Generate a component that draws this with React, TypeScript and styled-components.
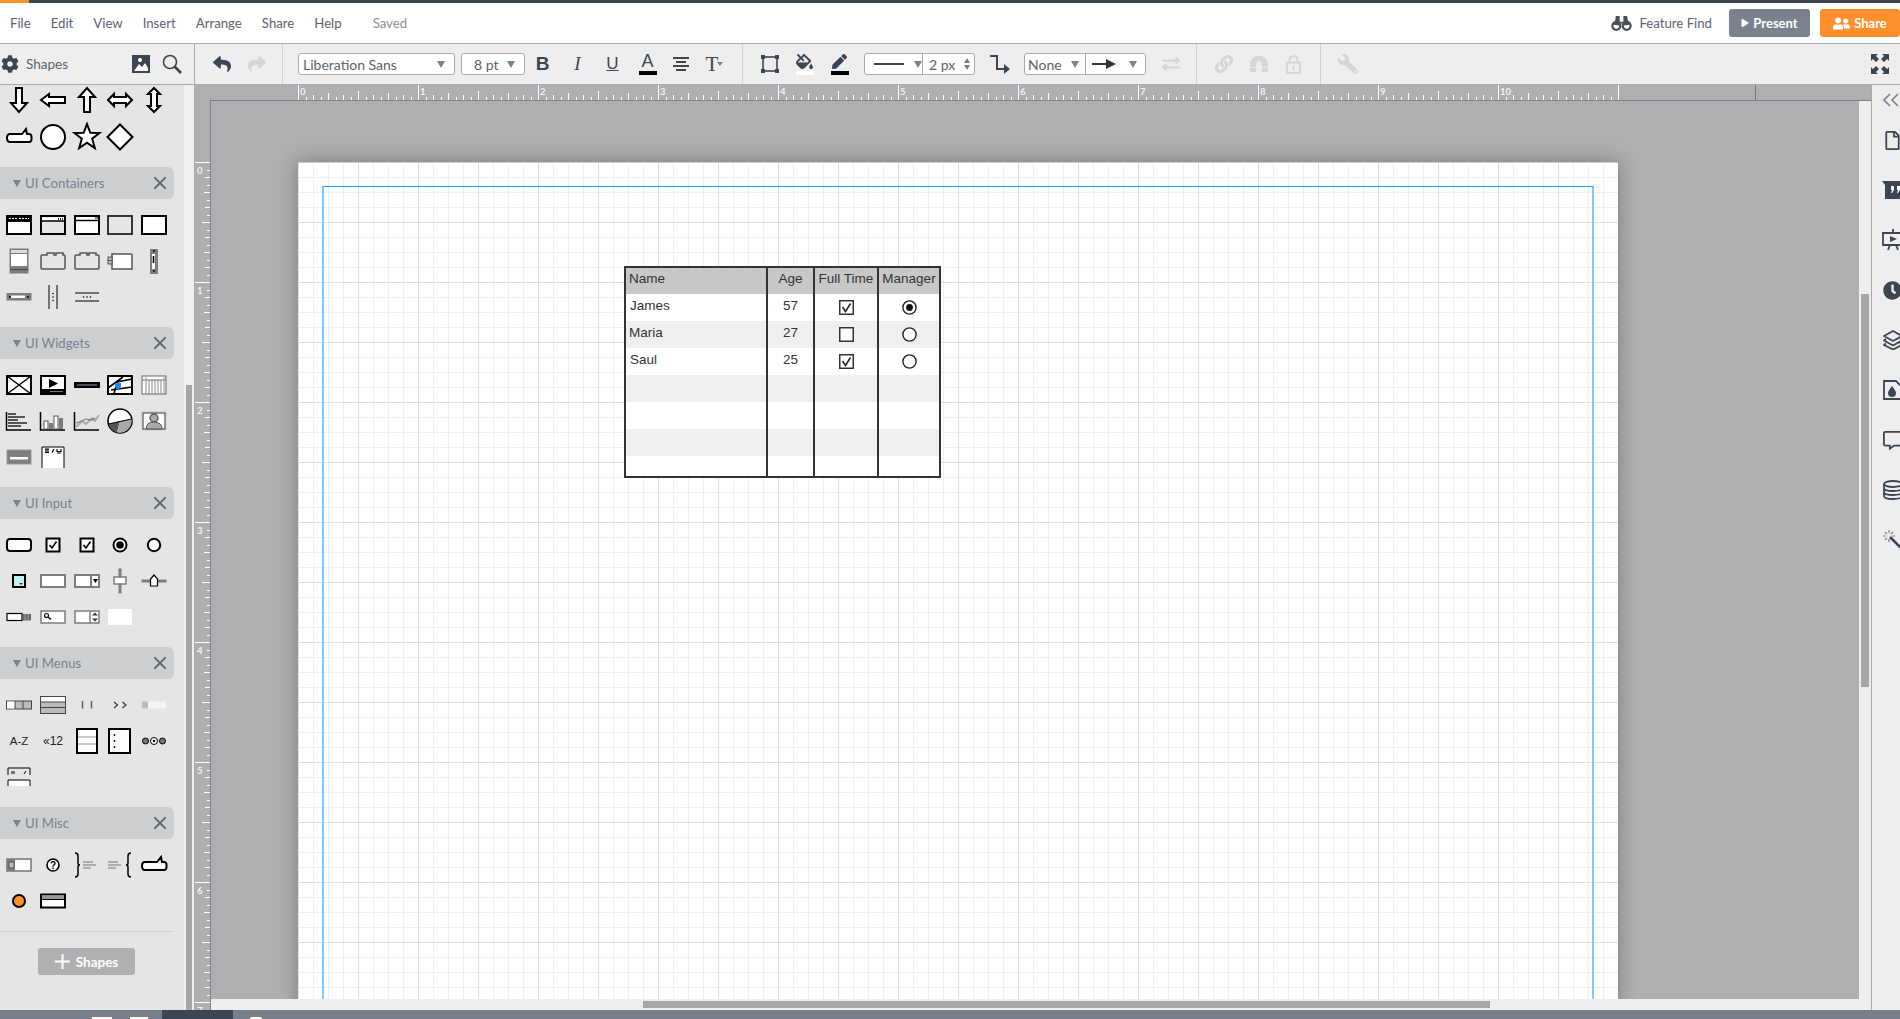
import React from "react";
import styled, { createGlobalStyle } from "styled-components";
import {
  FaCog, FaReply, FaShare, FaFillDrip, FaPen, FaExchangeAlt, FaLink, FaMagnet, FaWrench,
  FaUserFriends, FaClock, FaRegFile, FaRegCommentAlt, FaPlay,
} from "react-icons/fa";

const UI = `Lato, "Noto Sans", sans-serif`;
const DARK = "#3c4653";
const GREY = "#aeafb1";

const Global = createGlobalStyle`
  html, body { margin: 0; padding: 0; background: #fff; overflow: hidden; }
  * { box-sizing: border-box; }
`;

const Shell = styled.div`
  width: 1900px; height: 1019px; display: flex; flex-direction: column; overflow: hidden; font-family: ${UI};
`;
const Stripe = styled.div`height: 3px; flex: none; background: ${DARK};`;
const StripeProgress = styled.div`height: 3px; width: 29px; background: #ff8f2b;`;
const MenuBar = styled.div`
  height: 41px; flex: none; display: flex; align-items: center; gap: 20px; padding-left: 10px; background: #fff;
  border-bottom: 1px solid #aaa; font-size: 13.2px; color: #5c636d;
`;
const MenuItem = styled.span``;
const SavedLabel = styled.span`margin-left: 11px; color: #8c9198;`;
const MenuRight = styled.div`margin-left: auto; display: flex; align-items: center; height: 100%;`;
const FeatureFind = styled.div`display: flex; align-items: center; gap: 7px; margin-right: 7px; color: #5c636d; font-size: 13.2px;`;
const HeadButton = styled.div<{ $bg: string; $w: number }>`
  width: ${(p) => p.$w}px; height: 28px; border-radius: 3px; background: ${(p) => p.$bg};
  margin-left: 10px; color: #fff; font-size: 13px; font-weight: 700; display: flex; align-items: center; justify-content: center; gap: 4px;
`;

const Toolbar = styled.div`
  height: 41px; flex: none; display: flex; background: #eee; border-bottom: 1px solid #aaa; color: ${DARK};
`;
const ToolGroup = styled.div<{ $w?: number; $pad: number }>`
  ${(p) => (p.$w ? `width: ${p.$w}px; border-right: 1px solid ${p.$w === 195 ? "#aaa" : "#d2d2d2"};` : "flex: 1;")}
  flex-shrink: 0; padding-left: ${(p) => p.$pad}px; display: flex; align-items: center;
`;
const ShapesLabel = styled.span`margin-left: 7px; width: 106px; font-size: 13.5px; color: #5c636d;`;
const Tool = styled.div<{ $off?: boolean; $w?: number; $ml?: number }>`
  width: ${(p) => p.$w ?? 35}px; height: 100%; flex: none; display: flex; align-items: center; justify-content: center;
  margin-left: ${(p) => p.$ml ?? 0}px; font-size: 18px; color: ${(p) => (p.$off ? "#d6d6d6" : DARK)};
`;
const SwatchTool = styled(Tool)`flex-direction: column; justify-content: flex-start; padding-top: 9px;`;
const SwatchIcon = styled.div`height: 17px; display: flex; align-items: center; justify-content: center; font-size: 17px;`;
const SwatchBar = styled.div<{ $c: string }>`width: 18px; height: 4px; margin-top: 1px; background: ${(p) => p.$c};`;
const BoldMark = styled.span`font: 700 19px "Liberation Sans", sans-serif;`;
const ItalicMark = styled.span`font: italic 400 19px "Liberation Serif", serif;`;
const UnderMark = styled.span`font: 400 17px "Liberation Sans", sans-serif; text-decoration: underline;`;
const AMark = styled.span`font: 400 18px "Liberation Sans", sans-serif; line-height: 17px;`;
const SerifT = styled.span`font: 400 21px "Liberation Serif", serif;`;
const Caret = styled.span<{ $ml?: number }>`
  width: 0; height: 0; flex: none; margin-left: ${(p) => p.$ml ?? 0}px;
  border-left: 4px solid transparent; border-right: 4px solid transparent; border-top: 7px solid #7a828e;
`;
const TinyCaret = styled(Caret)`border-left-width: 3px; border-right-width: 3px; border-top-width: 4px; margin-left: -1px;`;
const Select = styled.div<{ $w: number; $ml?: number }>`
  width: ${(p) => p.$w}px; height: 22px; flex: none; margin-left: ${(p) => p.$ml ?? 0}px; display: flex; align-items: center;
  background: #fff; border: 1px solid #aaa; border-radius: 3px; font-size: 14px; color: #5c636d;
`;
const SelectText = styled.span<{ $pl: number }>`padding-left: ${(p) => p.$pl}px; flex: 1; white-space: nowrap;`;
const SelectCaret = styled(Caret)`margin-right: 9px;`;
const NoneCaret = styled(Caret)`margin-right: 6px;`;
const SelectPart = styled.div<{ $w?: number; $line?: boolean }>`
  ${(p) => (p.$w ? `width: ${p.$w}px;` : "flex: 1;")} height: 100%; display: flex; align-items: center;
  ${(p) => p.$line && "border-right: 1px solid #aaa;"}
`;
const LineSample = styled.span<{ $w: number; $ml: number }>`width: ${(p) => p.$w}px; margin-left: ${(p) => p.$ml}px; height: 2px; background: #444; flex: none;`;
const Spinner = styled.span`display: flex; flex-direction: column; gap: 2px; margin-right: 4px;`;
const SpinUp = styled.span`width: 0; height: 0; border: 3px solid transparent; border-top: 0; border-bottom: 5px solid #7a828e;`;
const SpinDown = styled.span`width: 0; height: 0; border: 3px solid transparent; border-bottom: 0; border-top: 5px solid #7a828e;`;
const FullScreen = styled.div`margin-left: auto; margin-right: 11px; display: flex;`;
const FlipWrench = styled(FaWrench)`transform: scaleX(-1);`;
const ArchMagnet = styled(FaMagnet)`transform: rotate(180deg);`;

const Main = styled.div`flex: 1; min-height: 0; display: flex;`;
const Sidebar = styled.div`width: 195px; flex: none; display: flex; border-right: 1px solid #aaa;`;
const SideList = styled.div`width: 184px; flex: none; background: #e5e5e5; overflow: hidden;`;
const SideTrack = styled.div`width: 10px; background: #f0f0f0; padding: 300px 2px 0;`;
const SideThumb = styled.div`height: 100%; background: #a5a7a5;`;
const SectionHeader = styled.div`
  width: 174px; height: 32px; background: #ccced0; border-radius: 0 6px 6px 0; display: flex; align-items: center;
  padding: 0 8px 0 13px; font-size: 13.2px; color: #7a828e;
`;
const SectionTitle = styled.span`margin-left: 4px; flex: 1;`;
const ShapeGrid = styled.div<{ $first?: boolean }>`
  display: grid; grid-template-columns: repeat(5, 33.75px); grid-auto-rows: 36px;
  padding: ${(p) => (p.$first ? "0 0 12px 2px" : "8px 0 12px 2px")}; row-gap: ${(p) => (p.$first ? "1px" : "0")};
  margin-top: ${(p) => (p.$first ? "-3px" : "0")};
`;
const Glyph = styled.svg`width: 34px; height: 36px; display: block;`;
const SideRule = styled.div`width: 174px; height: 1px; background: #d0d0d0;`;
const AddButton = styled.div`
  width: 97px; height: 27px; margin: 16px 0 0 38px; background: #aeb0b2; border-radius: 3px; color: #fff; font-weight: 700; font-size: 13.5px;
  display: flex; align-items: center; justify-content: center; gap: 6px;
`;

const Work = styled.div`flex: 1; min-width: 0; display: flex; flex-direction: column; background: ${GREY};`;
const RulerSvg = styled.svg`display: block; flex: none;`;
const WorkBody = styled.div`flex: 1; min-height: 0; display: flex;`;
const ViewColumn = styled.div`flex: 1; min-width: 0; display: flex; flex-direction: column;`;
const ViewRow = styled.div`flex: 1; min-height: 0; display: flex;`;
const Canvas = styled.div`flex: 1; min-width: 0; overflow: hidden; background: ${GREY}; padding: 61px 0 0 87px;`;
const Page = styled.div`
  position: relative; width: 1320px; height: 1020px; padding: 23px 24px 0; background-color: #fff; box-shadow: 0 0 18px rgba(0,0,0,.3);
  border-top: 1px solid #ccc;
  background-image:
    linear-gradient(#dedede 1px, transparent 1px), linear-gradient(90deg, #dedede 1px, transparent 1px),
    linear-gradient(#efefef 1px, transparent 1px), linear-gradient(90deg, #efefef 1px, transparent 1px);
  background-size: 60px 60px, 60px 60px, 15px 15px, 15px 15px;
  background-position: 0 -1px;
`;
const MarginFrame = styled.div`
  height: 100%; border-top: 1px solid #0a9cff; border-left: 2px solid #7fc8ff; border-right: 2px solid #7fc8ff;
`;
const VTrack = styled.div`width: 12px; flex: none; background: #eee; padding: 193px 2px 0 2px;`;
const VThumb = styled.div`height: 393px; background: #a5a7a5;`;
const HTrack = styled.div`height: 11px; flex: none; background: #eee; padding: 2px 0 0 432px;`;
const HThumb = styled.div`width: 847px; height: 7px; background: #a5a7a5;`;
const Rail = styled.div`width: 29px; flex: none; background: #eee; border-left: 1px solid #aaa; overflow: hidden; color: ${DARK};`;
const RailCell = styled.div<{ $h: number }>`height: ${(p) => p.$h}px; padding-left: 11px; display: flex; align-items: center; font-size: 19px;`;
const RailClip = styled.div`width: 22px; flex: none; display: flex;`;

const BottomBar = styled.div`height: 9px; flex: none; background: #777f8b; display: flex; overflow: hidden;`;
const BarMark = styled.div<{ $ml: number; $w: number; $round?: boolean }>`
  width: ${(p) => p.$w}px; height: 2px; margin: 7px 0 0 ${(p) => p.$ml}px; background: #fff; border-radius: ${(p) => (p.$round ? "6px 6px 0 0" : "0")};
`;
const BarTab = styled.div`width: 71px; margin-left: 14px; background: ${DARK};`;

const TableNode = styled.div`
  position: absolute; left: 326px; top: 103px; width: 317px; height: 212px; background: #fff; border: 2px solid #333;
  font: 13.5px/23px "Liberation Sans", sans-serif; color: #333; display: flex; flex-direction: column;
`;
const TableRow = styled.div<{ $bg: string; $h: number }>`
  height: ${(p) => p.$h}px; background: ${(p) => p.$bg}; display: grid; grid-template-columns: 140px 47px 64px 62px;
`;
const TextCell = styled.div<{ $pl: number; $head?: boolean }>`
  padding-left: ${(p) => p.$pl}px; ${(p) => p.$head && "line-height: 21px;"} white-space: nowrap;
`;
const ColCell = styled.div<{ $head?: boolean }>`
  border-left: 2px solid #333; display: flex; justify-content: center; align-items: ${(p) => (p.$head ? "flex-start" : "center")};
  ${(p) => p.$head && "line-height: 21px;"}
`;
const NumCell = styled(ColCell)`align-items: flex-start;`;

const W = "#fff";
const K = "#000";
const G = "#7d7d7d";

const Shape: React.FC<{ children: React.ReactNode }> = ({ children }) => (
  <Glyph viewBox="-17 -18 34 36" fill="none" stroke={K} strokeWidth={2}>{children}</Glyph>
);
const Dots: React.FC<{ pts: number[][]; r?: number; c?: string }> = ({ pts, r = 0.9, c = K }) => (
  <>{pts.map((p, i) => <circle key={i} cx={p[0]} cy={p[1]} r={r} fill={c} stroke="none" />)}</>
);
const Poly: React.FC<{ p: string }> = ({ p }) => <polygon points={p} fill={W} strokeLinejoin="miter" />;
const Check = () => <path d="M-3.5 0 L-1 3 L3.5 -3.5" strokeWidth={1.6} />;
const Callout = () => <path d="M-9 -3 H3 L7 -8 L8 -3 H10 Q12.5 -3 12.5 0 V2 Q12.5 5 10 5 H-9 Q-12 5 -12 1 Q-12 -3 -9 -3 Z" fill={W} />;

const topShapes = [
  <Poly p="-3,-12 3,-12 3,3 8,3 0,12 -8,3 -3,3" />,
  <Poly p="-12,0 -4,-6 -4,-3 12,-3 12,3 -4,3 -4,6" />,
  <Poly p="-3,12 3,12 3,-3 8,-3 0,-12 -8,-3 -3,-3" />,
  <Poly p="-12,0 -6,-6 -6,-3 6,-3 6,-6 12,0 6,6 6,3 -6,3 -6,6" />,
  <Poly p="0,-12 6,-6 3,-6 3,6 6,6 0,12 -6,6 -3,6 -3,-6 -6,-6" />,
  <Callout />,
  <circle r={12} fill={W} />,
  <Poly p="0,-13 3.3,-4.2 12.5,-4 5.2,1.7 7.8,11 0,5.6 -7.8,11 -5.2,1.7 -12.5,-4 -3.3,-4.2" />,
  <Poly p="0,-12.5 12.5,0 0,12.5 -12.5,0" />,
];
const containers = [
  <><rect x={-12} y={-9} width={24} height={18} fill={W} /><rect x={-12} y={-9} width={24} height={6} fill={K} stroke="none" /><path d="M-10 -6.5H-2M0 -6.5H10" stroke={W} strokeWidth={1} strokeDasharray="2 1" /></>,
  <><rect x={-12} y={-9} width={24} height={18} /><rect x={-11} y={-7.5} width={22} height={3} fill={W} stroke="none" /><path d="M-12 -4H12" strokeWidth={1.5} /><path d="M5 -6H10" stroke={K} strokeWidth={1.5} strokeDasharray="1 1" /></>,
  <><rect x={-12} y={-9} width={24} height={18} fill={W} /><path d="M-12 -4.5H12" strokeWidth={1.5} /><path d="M8 -7H11" stroke={K} strokeWidth={1} /></>,
  <rect x={-12} y={-9} width={24} height={18} strokeWidth={1.8} stroke="#222" />,
  <rect x={-12} y={-9} width={24} height={18} fill={W} />,
  <><rect x={-9} y={-12} width={18} height={24} fill={G} stroke={G} strokeWidth={1} /><rect x={-8} y={-11} width={16} height={3} fill="#ddd" stroke="none" /><rect x={-8} y={-7} width={16} height={12} fill={W} stroke="none" /><path d="M-9 8.5H9" stroke="#444" strokeWidth={1} /></>,
  <path d="M-12 -5Q-12 -6 -11 -6H-6V-8H1V-6H3V-8H10V-6H11Q12 -6 12 -5V7Q12 8 11 8H-11Q-12 8 -12 7Z" stroke="#555" strokeWidth={1.5} fill="none" />,
  <path d="M-12 -5Q-12 -6 -11 -6H-7V-8H0V-6H2V-8H9V-6H11Q12 -6 12 -5V7Q12 8 11 8H-11Q-12 8 -12 7Z" stroke="#555" strokeWidth={1.5} fill="none" />,
  <><path d="M-8 -7H11Q12 -7 12 -6V8H-8Z" fill={W} stroke="#555" strokeWidth={1.5} /><rect x={-12} y={-4} width={4} height={3.5} fill="#bbb" stroke="#555" strokeWidth={1} /><rect x={-12} y={-.5} width={4} height={3.5} fill="#bbb" stroke="#555" strokeWidth={1} /></>,
  <><rect x={-4} y={-12} width={8} height={25} fill={G} stroke="none" /><rect x={-2} y={-7} width={3} height={15} fill={W} stroke="none" /><path d="M-.5 -5V2" strokeWidth={1.6} /><Dots pts={[[0, -10], [0, 10]]} /></>,
  <><rect x={-12.5} y={-4} width={25} height={7.5} fill={G} stroke="none" /><rect x={-8} y={-1.5} width={14} height={2.5} fill={W} stroke="none" /><Dots pts={[[-9, 0], [9, 0]]} /></>,
  <><path d="M-4 -12V12M4 -12V12" strokeWidth={1} /><Dots pts={[[0, -3.5], [0, 0], [0, 3.5]]} r={.8} /></>,
  <><path d="M-12 -4H12M-12 4H12" strokeWidth={1} /><Dots pts={[[-3.5, 0], [0, 0], [3.5, 0]]} r={.8} /></>,
];
const widgets = [
  <><rect x={-12} y={-9} width={24} height={18} fill={W} /><path d="M-12 -9L12 9M12 -9L-12 9" strokeWidth={1.5} /></>,
  <><rect x={-12} y={-9} width={24} height={18} fill={W} /><path d="M-4 -6L5 -1.5L-4 3Z" fill={K} stroke="none" /><rect x={-12} y={4} width={24} height={5} fill={K} stroke="none" /><path d="M-3 6.5H10" stroke="#777" strokeWidth={1} /></>,
  <><rect x={-13} y={-3} width={26} height={6} fill={K} stroke="none" /><path d="M-10 0H10" stroke="#667" strokeWidth={1.5} /></>,
  <><rect x={-12} y={-9} width={24} height={18} fill={W} /><path d="M-12 3L3 -8M-6 9L-3 -3L12 -6M-9 5L12 2" strokeWidth={1.6} /><path d="M-5 -2H1V2L-2 5L-5 2Z" fill="#1e88e5" stroke="none" /></>,
  <><rect x={-12} y={-9} width={24} height={18} fill={W} stroke="#666" strokeWidth={1} /><path d="M-12 -5H12" stroke="#666" strokeWidth={1} /><path d="M-8 -5V9M-5 -5V9M-2 -5V9M1 -5V9M4 -5V9M7 -5V9M10 -5V9" stroke="#888" strokeWidth={1} /><Dots pts={[[-8, -7], [10, -7]]} r={.6} /></>,
  <><path d="M-12.5 -9V9H12" strokeWidth={1.5} /><path d="M-11 -7H-3M-11 -4H6M-11 -1H-1M-11 2H8M-11 5H2" stroke="#555" strokeWidth={2.2} /></>,
  <><path d="M-12.5 -9V9H12" strokeWidth={1.5} /><rect x={-9} y={0} width={4} height={8} fill={W} stroke="#555" strokeWidth={1} /><rect x={-4} y={2} width={4} height={6} fill={G} stroke="none" /><rect x={1} y={-5} width={4} height={13} fill={W} stroke="#555" strokeWidth={1} /><rect x={6} y={-3} width={4} height={11} fill={G} stroke="none" /></>,
  <><path d="M-12.5 -9V9H12" strokeWidth={1.5} /><path d="M-11 6L-5 0L-1 3L5 -3L8 0L12 -6" stroke="#aaa" strokeWidth={1.8} /><path d="M-11 2L-5 0L-1 -2L5 -1L8 -3" stroke={G} strokeWidth={1.2} /></>,
  <><circle r={12} fill={W} strokeWidth={1.6} /><path d="M0 0L-11.5 3A12 12 0 0 0 -3 11.5Z" fill="#555" stroke="none" /><path d="M0 0L-3 11.5A12 12 0 0 0 11.5 -2Z" fill="#aaa" stroke="none" /><path d="M-11.5 3L11.5 -2" strokeWidth={1} /></>,
  <><rect x={-12} y={-9} width={24} height={18} fill={W} stroke="#ccc" strokeWidth={1} /><rect x={-11} y={-8} width={22} height={16} stroke="#333" strokeWidth={1} /><circle cy={-3} r={4} stroke="#555" strokeWidth={1.3} fill="#aaa" /><path d="M-8 8Q-8 1 0 1Q8 1 8 8Z" fill="#aaa" stroke="#555" strokeWidth={1} /></>,
  <><rect x={-12} y={-7} width={24} height={14} fill={G} stroke="#999" strokeWidth={1} /><rect x={-9} y={0} width={18} height={2.5} fill={W} stroke="none" /></>,
  <><path d="M-11 11V-10H11V11" fill={W} strokeWidth={1} /><path d="M-8 -8H-4M-7 -8V-4.5M-5 -8V-4.5M-8 -4.5H-4M-1 -4.5L1 -8M4 -8V-5.5H8V-8M4 -4H8" strokeWidth={1.2} /></>,
];
const inputs = [
  <rect x={-12} y={-6} width={24} height={12} rx={3} fill={W} />,
  <><rect x={-6.5} y={-6.5} width={13} height={13} fill={W} /><Check /></>,
  <><rect x={-6.5} y={-6.5} width={13} height={13} fill={W} /><Check /></>,
  <><circle r={6.5} fill={W} /><circle r={3.8} fill={K} stroke="none" /></>,
  <circle r={6.2} fill={W} />,
  <><rect x={-6} y={-6} width={12} height={12} fill="#b7f0ff" /><path d="M-.5 1H5V5H-.5Z" fill="#e5e5e5" stroke="none" /><path d="M0 2H4L2 4Z" fill="#333" stroke="none" /></>,
  <rect x={-12} y={-6} width={24} height={12} fill={W} stroke={G} />,
  <><rect x={-12} y={-6} width={24} height={12} fill={W} stroke={G} /><rect x={3} y={-5} width={2} height={10} fill={G} stroke="none" /><path d="M6 -2H11L8.5 2Z" fill={K} stroke="none" /></>,
  <><path d="M0 -12.5V12.5" stroke={G} strokeWidth={3} /><rect x={-6} y={-4} width={12} height={7} fill={W} stroke={G} strokeWidth={1.5} /></>,
  <><path d="M-12.5 0H12.5" stroke={G} strokeWidth={3} /><path d="M-3.5 -2L0 -6L3.5 -2V5H-3.5Z" fill={W} strokeWidth={1.2} /></>,
  <><rect x={-12} y={-3.5} width={15} height={7} fill={W} strokeWidth={1.2} /><rect x={4} y={-3} width={8} height={6.5} fill="#666" stroke="none" /><path d="M6 -3V3M9 -3V3" stroke="#ccc" strokeWidth={.6} /></>,
  <><rect x={-12} y={-6} width={24} height={12} fill={W} stroke={G} strokeWidth={1.5} /><circle cx={-6.5} cy={-1.5} r={2} strokeWidth={1.2} /><path d="M-5 0L-2 2.5" strokeWidth={1.4} /></>,
  <><rect x={-12} y={-6} width={24} height={12} fill={W} stroke={G} strokeWidth={1.5} /><path d="M3 -6V6" stroke={G} strokeWidth={1.5} /><path d="M5 -1.5H11L8 -4.5ZM5 1.5H11L8 4.5Z" fill="#333" stroke="none" /></>,
  <rect x={-12} y={-8} width={24} height={16} fill={W} stroke="none" />,
];
const menus = [
  <><rect x={-12.5} y={-4} width={25} height={8} fill="#bbb" stroke="#444" strokeWidth={1} /><rect x={-12} y={-3.5} width={8} height={7} fill={W} stroke="none" /><path d="M-4 -4V4M4 -4V4" stroke="#444" strokeWidth={1} /></>,
  <><rect x={-12.5} y={-8.5} width={25} height={17} fill="#bbb" stroke="#444" strokeWidth={1} /><rect x={-12} y={-8} width={24} height={5} fill={W} stroke="none" /><path d="M-12 -3H12M-12 2.5H12" stroke="#444" strokeWidth={1} /></>,
  <path d="M-4.5 -4V3.5M4.5 -4V3.5" stroke="#666" strokeWidth={1.6} />,
  <path d="M-6 -3L-2.5 0L-6 3M2.5 -3L6 0L2.5 3" stroke="#333" strokeWidth={1.1} />,
  <><rect x={-12} y={-3.5} width={24} height={7} fill="#f4f4f4" stroke="none" /><rect x={-12} y={-3.5} width={6} height={7} fill="#bbb" stroke="none" /></>,
  <text x={0} y={4} textAnchor="middle" stroke="none" fill="#222" fontSize={11.5} fontFamily="Liberation Sans, sans-serif">A-Z</text>,
  <text x={0} y={4} textAnchor="middle" stroke="none" fill="#222" fontSize={12} fontFamily="Liberation Sans, sans-serif">«12</text>,
  <><rect x={-10} y={-12} width={20} height={24} fill={W} /><path d="M-9 -4H9M-9 3H9" stroke="#bbb" strokeWidth={1.5} /></>,
  <><rect x={-11} y={-12} width={21} height={24} fill={W} /><Dots pts={[[-5.5, -6], [-5.5, 0], [-5.5, 6]]} /></>,
  <><circle cx={-8.5} r={3} fill="#777" strokeWidth={1} /><circle r={3.5} fill={W} strokeWidth={1} /><circle cx={8.5} r={3} fill="#777" strokeWidth={1} /><circle r={1.2} fill={K} stroke="none" /></>,
  <><path d="M-11 -2V-9H11V-2" fill="none" strokeWidth={1} /><path d="M-7 -6V-3M-5 -6V-3M5 -3L7 -6" strokeWidth={1} /><path d="M-11 9V3H11V9" fill={W} strokeWidth={1} /></>,
];
const misc = [
  <><rect x={-12} y={-6} width={24} height={12} fill={W} stroke={G} strokeWidth={1.6} /><rect x={-12} y={-6} width={8} height={12} fill={G} stroke="none" /><rect x={-10} y={-3} width={5} height={6} fill="#bbb" stroke="#444" strokeWidth={.8} /></>,
  <><circle r={6} fill={W} strokeWidth={1.6} /><text x={0} y={4} textAnchor="middle" stroke="none" fill={K} fontSize={10} fontWeight={700} fontFamily="Liberation Sans, sans-serif">?</text></>,
  <><path d="M-12 -12Q-9 -12 -9 -9V-2Q-9 0 -7 0Q-9 0 -9 2V9Q-9 12 -12 12" strokeWidth={1.5} /><path d="M-4 -3H6M-4 0H9M-4 3H4" stroke="#999" strokeWidth={1.6} /></>,
  <><path d="M11 -12Q8 -12 8 -9V-2Q8 0 6 0Q8 0 8 2V9Q8 12 11 12" strokeWidth={1.5} /><path d="M-12 -3H-2M-12 0H1M-12 3H-4" stroke="#999" strokeWidth={1.6} /></>,
  <Callout />,
  <circle r={6} fill="#ff9229" />,
  <><rect x={-12} y={-6.5} width={24} height={13} fill={W} /><rect x={-11} y={-5.5} width={22} height={4} fill="#999" stroke="none" /><path d="M-11 -1.5H11" strokeWidth={1} /></>,
];
const sections: { title: string; items: React.ReactNode[] }[] = [
  { title: "UI Containers", items: containers },
  { title: "UI Widgets", items: widgets },
  { title: "UI Input", items: inputs },
  { title: "UI Menus", items: menus },
  { title: "UI Misc", items: misc },
];

const hTicks = () => {
  const out: React.ReactNode[] = [];
  for (let i = 0; i <= 176; i++) {
    const x = Math.round(298 + 7.5 * i) + 0.5;
    const h = i % 16 === 0 ? 15 : i % 8 === 0 ? 9 : i % 4 === 0 ? 7 : i % 2 === 0 ? 5 : 3;
    out.push(<line key={i} x1={x} x2={x} y1={100} y2={100 - h} stroke="#fff" />);
  }
  for (let n = 0; n <= 10; n++) {
    out.push(<text key={`t${n}`} x={298 + 120 * n + 2} y={95} fontSize={9.5} fontWeight={700} fill="#f2f2f2" fontFamily="Lato, sans-serif">{n}</text>);
  }
  return out;
};
const vTicks = () => {
  const out: React.ReactNode[] = [];
  for (let i = 0; i <= 112; i++) {
    const y = Math.round(162 + 7.5 * i) + 0.5;
    const w = i % 16 === 0 ? 15 : i % 8 === 0 ? 8 : i % 4 === 0 ? 6 : i % 2 === 0 ? 5 : 3;
    out.push(<line key={i} y1={y} y2={y} x1={210} x2={210 - w} stroke="#fff" />);
  }
  for (let n = 0; n <= 7; n++) {
    out.push(<text key={`t${n}`} x={197} y={162 + 120 * n + 12} fontSize={9.5} fontWeight={700} fill="#f2f2f2" fontFamily="Lato, sans-serif">{n}</text>);
  }
  return out;
};

const rows = [
  { name: "James", pl: 4, age: "57", c: true, r: true },
  { name: "Maria", pl: 3, age: "27", c: false, r: false },
  { name: "Saul", pl: 4, age: "25", c: true, r: false },
];
const TinyIcon = styled.svg<{ $w?: number; $h?: number }>`width: ${(p) => p.$w ?? 16}px; height: ${(p) => p.$h ?? 16}px; display: block; flex: none;`;
const RailIcon = styled(TinyIcon)`margin-left: -1px;`;
const ArrowIcon = styled(TinyIcon)`margin-left: 6px;`;

export default function App() {
  return (
    <Shell>
      <Global />
      <Stripe><StripeProgress /></Stripe>
      <MenuBar>
        {["File", "Edit", "View", "Insert", "Arrange", "Share", "Help"].map((m) => <MenuItem key={m}>{m}</MenuItem>)}
        <SavedLabel>Saved</SavedLabel>
        <MenuRight>
          <FeatureFind>
            <TinyIcon viewBox="0 0 22 16" $w={21} $h={15} fill="#4a4f57">
              <path d="M5 0H9V6H13V0H17L18 6L21 9L14 10L13 8H9L8 10L1 9L4 6Z" />
              <circle cx={5.5} cy={10.5} r={4.2} fill="none" stroke="#4a4f57" strokeWidth={2.4} />
              <circle cx={16.5} cy={10.5} r={4.2} fill="none" stroke="#4a4f57" strokeWidth={2.4} />
            </TinyIcon>
            Feature Find
          </FeatureFind>
          <HeadButton $bg="#7a828e" $w={81}><FaPlay size={8} />Present</HeadButton>
          <HeadButton $bg="#ff8f2b" $w={80}><FaUserFriends size={17} />Share</HeadButton>
        </MenuRight>
      </MenuBar>
      <Toolbar>
        <ToolGroup $w={195} $pad={1}>
          <FaCog size={18} />
          <ShapesLabel>Shapes</ShapesLabel>
          <TinyIcon viewBox="0 0 18 18" $w={18} $h={18}>
            <path d="M0 0H18V18H0Z" fill={DARK} />
            <path d="M2 16L7 9L10 12L13 8L16 13V16Z" fill="#fff" />
            <circle cx={8} cy={5} r={2} fill="#fff" />
          </TinyIcon>
          <Tool $w={44}>
            <TinyIcon viewBox="0 0 20 20" $w={20} $h={20} fill="none" stroke={DARK}><circle cx={8} cy={8} r={6.5} strokeWidth={1.6} /><path d="M12.5 12.5L19 19" strokeWidth={2.6} /></TinyIcon>
          </Tool>
        </ToolGroup>
        <ToolGroup $w={88} $pad={9}>
          <Tool><FaReply /></Tool>
          <Tool $off><FaShare /></Tool>
        </ToolGroup>
        <ToolGroup $w={460} $pad={15}>
          <Select $w={157}><SelectText $pl={4}>Liberation Sans</SelectText><SelectCaret /></Select>
          <Select $w={64} $ml={6}><SelectText $pl={12}>8 pt</SelectText><SelectCaret /></Select>
          <Tool><BoldMark>B</BoldMark></Tool>
          <Tool><ItalicMark>I</ItalicMark></Tool>
          <Tool><UnderMark>U</UnderMark></Tool>
          <SwatchTool><SwatchIcon><AMark>A</AMark></SwatchIcon><SwatchBar $c="#000" /></SwatchTool>
          <Tool $w={32}>
            <TinyIcon viewBox="0 0 16 14" $h={14} stroke={DARK} strokeWidth={2}><path d="M0 1H16M3 5H13M0 9H16M3 13H13" /></TinyIcon>
          </Tool>
          <Tool><SerifT>T</SerifT><TinyCaret /></Tool>
        </ToolGroup>
        <ToolGroup $w={454} $pad={9}>
          <Tool>
            <TinyIcon viewBox="0 0 18 18" $w={18} $h={18} fill="none" stroke={DARK}>
              <rect x={2} y={2} width={14} height={14} strokeWidth={1.6} /><path d="M0 0h4v4H0zM14 0h4v4h-4zM0 14h4v4H0zM14 14h4v4h-4z" fill={DARK} stroke="none" />
            </TinyIcon>
          </Tool>
          <SwatchTool><SwatchIcon><FaFillDrip /></SwatchIcon><SwatchBar $c="#fff" /></SwatchTool>
          <SwatchTool><SwatchIcon><FaPen size={15} /></SwatchIcon><SwatchBar $c="#000" /></SwatchTool>
          <Select $w={111} $ml={7}>
            <SelectPart $w={58} $line><LineSample $w={30} $ml={9} /><Caret $ml={10} /></SelectPart>
            <SelectPart><SelectText $pl={6}>2 px</SelectText><Spinner><SpinUp /><SpinDown /></Spinner></SelectPart>
          </Select>
          <Tool $ml={7}>
            <TinyIcon viewBox="0 0 20 20" $w={20} $h={20} fill="none" stroke={DARK} strokeWidth={2}><path d="M0 2H7V15H15" /><path d="M14 10L20 15L14 20Z" fill={DARK} stroke="none" /></TinyIcon>
          </Tool>
          <Select $w={122} $ml={7}>
            <SelectPart $w={61} $line><SelectText $pl={3}>None</SelectText><NoneCaret /></SelectPart>
            <SelectPart>
              <ArrowIcon viewBox="0 0 24 10" $w={24} $h={10}><path d="M0 4H14V0L24 5L14 10V6H0Z" fill="#333" /></ArrowIcon>
              <Caret $ml={13} />
            </SelectPart>
          </Select>
          <Tool $off $ml={7}><FaExchangeAlt /></Tool>
        </ToolGroup>
        <ToolGroup $w={124} $pad={9}>
          <Tool $off><FaLink /></Tool>
          <Tool $off><ArchMagnet /></Tool>
          <Tool $off>
            <TinyIcon viewBox="0 0 16 20" $w={15} $h={19} fill="none" stroke="#d6d6d6" strokeWidth={2}><rect x={1} y={8} width={14} height={11} /><path d="M4 8V4Q4 1 8 1Q12 1 12 4V8M8 11V16" /></TinyIcon>
          </Tool>
        </ToolGroup>
        <ToolGroup $pad={9}>
          <Tool $off><FlipWrench size={20} /></Tool>
          <FullScreen>
            <TinyIcon viewBox="0 0 18 20" $w={18} $h={20} fill={DARK}>
              <path d="M0 0H7L5 2L8 5L5 8L2 5L0 7ZM18 0H11L13 2L10 5L13 8L16 5L18 7ZM0 20H7L5 18L8 15L5 12L2 15L0 13ZM18 20H11L13 18L10 15L13 12L16 15L18 13Z" />
            </TinyIcon>
          </FullScreen>
        </ToolGroup>
      </Toolbar>
      <Main>
        <Sidebar>
          <SideList>
            <ShapeGrid $first>{topShapes.map((s, i) => <Shape key={i}>{s}</Shape>)}</ShapeGrid>
            {sections.map((sec) => (
              <React.Fragment key={sec.title}>
                <SectionHeader>
                  <Caret />
                  <SectionTitle>{sec.title}</SectionTitle>
                  <TinyIcon viewBox="0 0 12 12" $w={12} $h={12} stroke="#5a616b" strokeWidth={1.8}><path d="M0 0L12 12M12 0L0 12" /></TinyIcon>
                </SectionHeader>
                <ShapeGrid>{sec.items.map((s, i) => <Shape key={i}>{s}</Shape>)}</ShapeGrid>
              </React.Fragment>
            ))}
            <SideRule />
            <AddButton>
              <TinyIcon viewBox="0 0 15 15" $w={15} $h={15} stroke="#fff" strokeWidth={2}><path d="M7.5 0V15M0 7.5H15" /></TinyIcon>
              Shapes
            </AddButton>
          </SideList>
          <SideTrack><SideThumb /></SideTrack>
        </Sidebar>
        <Work>
          <RulerSvg width={1676} height={16} viewBox="195 85 1676 16">
            {hTicks()}
            <line x1={1755.5} x2={1755.5} y1={85} y2={100} stroke="#777" />
            <line x1={210} x2={1871} y1={100.5} y2={100.5} stroke="#808285" />
          </RulerSvg>
          <WorkBody>
            <RulerSvg width={16} height={909} viewBox="195 101 16 909">
              {vTicks()}
              <line x1={210.5} x2={210.5} y1={101} y2={1010} stroke="#808285" />
            </RulerSvg>
            <ViewColumn>
              <ViewRow>
                <Canvas>
                  <Page>
                    <MarginFrame />
                    <TableNode>
                      <TableRow $bg="#c8c8c8" $h={26}>
                        <TextCell $pl={3} $head>Name</TextCell>
                        <ColCell $head>Age</ColCell>
                        <ColCell $head>Full Time</ColCell>
                        <ColCell $head>Manager</ColCell>
                      </TableRow>
                      {[0, 1, 2, 3, 4, 5, 6].map((i) => {
                        const r = rows[i];
                        return (
                          <TableRow key={i} $bg={i % 2 ? "#efefef" : "#fff"} $h={i === 6 ? 20 : 27}>
                            <TextCell $pl={r ? r.pl : 2}>{r?.name}</TextCell>
                            <NumCell>{r?.age}</NumCell>
                            <ColCell>
                              {r && (
                                <TinyIcon viewBox="0 0 15 15" $w={15} $h={15} fill="#fff" stroke="#333" strokeWidth={1.5}>
                                  <rect x={.75} y={.75} width={13.5} height={13.5} />
                                  {r.c && <path d="M3.5 7L6.5 11.5L11.5 3.5" fill="none" stroke="#222" />}
                                </TinyIcon>
                              )}
                            </ColCell>
                            <ColCell>
                              {r && (
                                <TinyIcon viewBox="0 0 15 15" $w={15} $h={15} fill="#fff" stroke="#222" strokeWidth={1.4}>
                                  <circle cx={7.5} cy={7.5} r={6.6} />
                                  {r.r && <circle cx={7.5} cy={7.5} r={3.4} fill="#111" stroke="none" />}
                                </TinyIcon>
                              )}
                            </ColCell>
                          </TableRow>
                        );
                      })}
                    </TableNode>
                  </Page>
                </Canvas>
                <VTrack><VThumb /></VTrack>
              </ViewRow>
              <HTrack><HThumb /></HTrack>
            </ViewColumn>
          </WorkBody>
        </Work>
        <Rail>
          <RailCell $h={30}>
            <TinyIcon viewBox="0 0 16 14" $w={16} $h={14} fill="none" stroke="#7a828e" strokeWidth={1.6}><path d="M7 1L1 7L7 13M15 1L9 7L15 13" /></TinyIcon>
          </RailCell>
          <RailCell $h={50}><RailClip><FaRegFile /></RailClip></RailCell>
          <RailCell $h={50}>
            <RailIcon viewBox="0 0 22 18" $w={22} $h={18}>
              <path d="M0 0H22V18H3V4Z" fill={DARK} /><path d="M9 5H12V9L10 12H9L10 9H9ZM15 5H18V9L16 12H15L16 9H15Z" fill="#fff" />
            </RailIcon>
          </RailCell>
          <RailCell $h={50}>
            <RailIcon viewBox="0 0 22 22" $w={22} $h={22} fill="none" stroke={DARK} strokeWidth={1.8}>
              <path d="M1 4H21V16H1ZM11 0V4M6 21L8 16M16 21L14 16" /><path d="M8 7L15 10L8 13Z" fill={DARK} stroke="none" />
            </RailIcon>
          </RailCell>
          <RailCell $h={50}><RailClip><FaClock /></RailClip></RailCell>
          <RailCell $h={50}>
            <TinyIcon viewBox="0 0 20 20" $w={20} $h={20} fill="none" stroke={DARK} strokeWidth={1.8} strokeLinejoin="round">
              <path d="M10 1L19 6L10 11L1 6Z" /><path d="M3 9L1 10.5L10 15.5L19 10.5L17 9" /><path d="M3 13.5L1 15L10 19.5L19 15L17 13.5" />
            </TinyIcon>
          </RailCell>
          <RailCell $h={50}>
            <TinyIcon viewBox="0 0 20 20" $w={20} $h={20} fill="none" stroke={DARK} strokeWidth={1.8}>
              <path d="M1 1H13L19 7V19H1Z" /><path d="M9 6Q13 11 13 13A4 4 0 0 1 5 13Q5 11 9 6Z" fill={DARK} stroke="none" />
            </TinyIcon>
          </RailCell>
          <RailCell $h={50}><RailClip><FaRegCommentAlt /></RailClip></RailCell>
          <RailCell $h={50}>
            <TinyIcon viewBox="0 0 20 20" $w={20} $h={20} fill="none" stroke={DARK} strokeWidth={1.8}>
              <ellipse cx={10} cy={4} rx={9} ry={3} /><path d="M1 4V16Q1 19 10 19Q19 19 19 16V4M1 8Q1 11 10 11Q19 11 19 8M1 12Q1 15 10 15Q19 15 19 12" />
            </TinyIcon>
          </RailCell>
          <RailCell $h={50}>
            <TinyIcon viewBox="0 0 20 20" $w={20} $h={20} fill="none" stroke={DARK}>
              <path d="M7 7L20 20" strokeWidth={2.6} /><path d="M6 0V3M6 9V12M0 6H3M9 6H12M2 2L4 4M10 2L8 4M2 10L4 8" stroke="#7a828e" strokeWidth={1.2} />
            </TinyIcon>
          </RailCell>
        </Rail>
      </Main>
      <BottomBar>
        <BarMark $ml={92} $w={20} />
        <BarMark $ml={18} $w={18} />
        <BarTab />
        <BarMark $ml={17} $w={12} $round />
      </BottomBar>
    </Shell>
  );
}
